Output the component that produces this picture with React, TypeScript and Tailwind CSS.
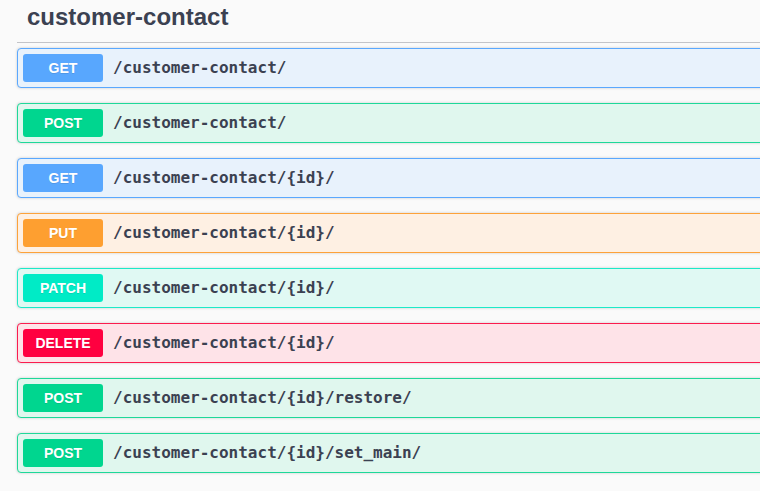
type Op = {
  method: string;
  path: string;
};

const styles: Record<string, { row: string; badge: string }> = {
  GET: { row: "border-[#5aa8fe] bg-[#e8f2fc]", badge: "bg-[#58a7fe]" },
  POST: { row: "border-[#1fd899] bg-[#e0f7ee]", badge: "bg-[#00d68f]" },
  PUT: { row: "border-[#fda23a] bg-[#fef0e3]", badge: "bg-[#fe9f30]" },
  PATCH: { row: "border-[#1de9c8] bg-[#e0f9f3]", badge: "bg-[#00ebc6]" },
  DELETE: { row: "border-[#fb1c4e] bg-[#fee3e8]", badge: "bg-[#ff0040]" },
};

const ops: Op[] = [
  { method: "GET", path: "/customer-contact/" },
  { method: "POST", path: "/customer-contact/" },
  { method: "GET", path: "/customer-contact/{id}/" },
  { method: "PUT", path: "/customer-contact/{id}/" },
  { method: "PATCH", path: "/customer-contact/{id}/" },
  { method: "DELETE", path: "/customer-contact/{id}/" },
  { method: "POST", path: "/customer-contact/{id}/restore/" },
  { method: "POST", path: "/customer-contact/{id}/set_main/" },
];

const OpBlock = ({ method, path }: Op) => {
  const s = styles[method];
  return (
    <div
      className={`flex h-[40px] items-center rounded-[4px] border p-[5px] shadow-[0_0_3px_rgba(0,0,0,0.19)] ${s.row}`}
    >
      <span
        className={`flex h-[28px] w-[80px] shrink-0 items-center justify-center rounded-[3px] text-[14px] font-bold text-white [text-shadow:0_1px_0_rgba(0,0,0,0.1)] ${s.badge}`}
      >
        {method}
      </span>
      <span className="px-[10px] font-['DejaVu_Sans_Mono',monospace] text-[16px] font-semibold text-[#3b4151]">
        {path}
      </span>
    </div>
  );
};

export default function App() {
  return (
    <div className="h-[491px] w-[760px] overflow-hidden bg-[#fafafa] font-['Liberation_Sans',Arial,sans-serif]">
      <div className="ml-[17px] w-[800px]">
        <h3 className="h-[43px] border-b border-[#c3c4c8] px-[10px] pt-[3px] text-[24px] font-bold leading-[28px] text-[#3b4151]">
          customer-contact
        </h3>
        <div className="mt-[5px] flex flex-col gap-[15px]">
          {ops.map((op, i) => (
            <OpBlock key={i} {...op} />
          ))}
        </div>
      </div>
    </div>
  );
}
